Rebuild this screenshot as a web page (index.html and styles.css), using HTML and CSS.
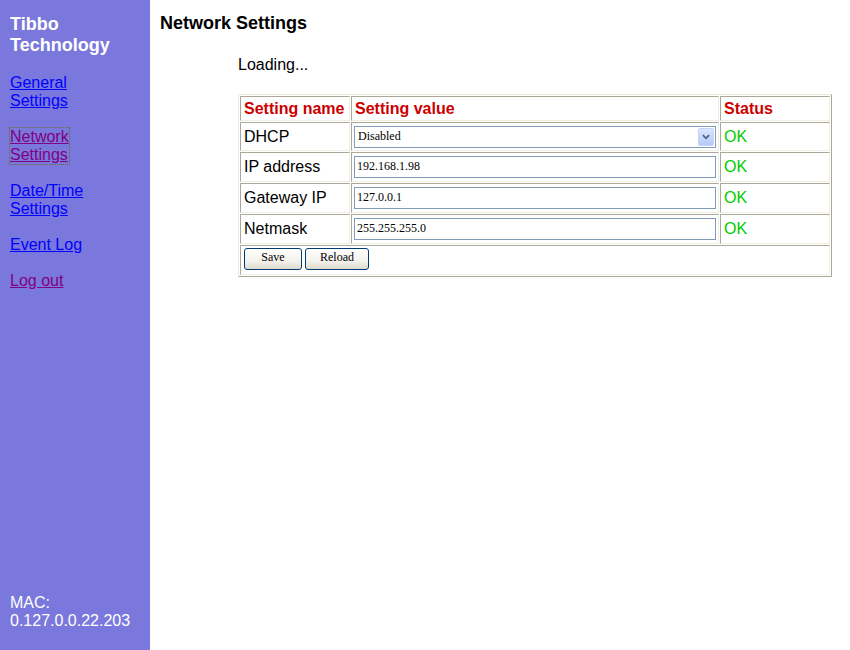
FILE: index.html
```html
<!DOCTYPE html>
<html>
<head>
<meta charset="utf-8">
<title>Network Settings</title>
<link rel="stylesheet" href="styles.css">
</head>
<body>
<div class="page">
  <aside class="sidebar">
    <div class="brand">Tibbo<br>Technology</div>
    <nav class="nav">
      <a href="#general" class="link">General<br>Settings</a>
      <a href="#network" class="link visited focused">Network<br>Settings</a>
      <a href="#datetime" class="link">Date/Time<br>Settings</a>
      <a href="#events" class="link">Event Log</a>
      <a href="#logout" class="link visited">Log out</a>
    </nav>
    <div class="mac">MAC:<br>0.127.0.0.22.203</div>
  </aside>
  <main class="main">
    <div class="title">Network Settings</div>
    <div class="content">
      <div class="loading">Loading...</div>
      <table class="settings">
        <tr class="head">
          <th class="c-name">Setting name</th>
          <th class="c-value">Setting value</th>
          <th class="c-status">Status</th>
        </tr>
        <tr class="row r-first">
          <td class="c-name">DHCP</td>
          <td class="c-value">
            <div class="selwrap">
              <div class="select">Disabled</div>
              <span class="arrow"><svg width="16" height="19" viewBox="0 0 16 19"><path d="M4.5 8 L8 11.5 L11.5 8" fill="none" stroke="#4d6185" stroke-width="2"/></svg></span>
            </div>
          </td>
          <td class="c-status ok">OK</td>
        </tr>
        <tr class="row">
          <td class="c-name">IP address</td>
          <td class="c-value"><input class="field" type="text" value="192.168.1.98"></td>
          <td class="c-status ok">OK</td>
        </tr>
        <tr class="row">
          <td class="c-name">Gateway IP</td>
          <td class="c-value"><input class="field" type="text" value="127.0.0.1"></td>
          <td class="c-status ok">OK</td>
        </tr>
        <tr class="row">
          <td class="c-name">Netmask</td>
          <td class="c-value"><input class="field" type="text" value="255.255.255.0"></td>
          <td class="c-status ok">OK</td>
        </tr>
        <tr class="row buttons">
          <td colspan="3"><button class="btn btn-save">Save</button><button class="btn btn-reload">Reload</button></td>
        </tr>
      </table>
    </div>
  </main>
</div>
</body>
</html>
```

FILE: styles.css
```css
html, body {
  margin: 0;
  padding: 0;
  background: #ffffff;
}

body {
  font-family: "Liberation Sans", Arial, sans-serif;
  font-size: 16px;
  color: #000;
}

.page {
  display: flex;
  height: 650px;
  width: 850px;
}

.sidebar {
  width: 150px;
  flex: 0 0 150px;
  box-sizing: border-box;
  background: #7a78dc;
  padding: 14px 10px 20px 10px;
  display: flex;
  flex-direction: column;
  color: #ffffff;
}

.brand {
  font-weight: bold;
  font-size: 18px;
  line-height: 21px;
}

.nav {
  display: flex;
  flex-direction: column;
  align-items: flex-start;
  gap: 18px;
  margin-top: 18px;
}

.link {
  color: #0000ff;
  text-decoration: underline;
  font-size: 16px;
  line-height: 18px;
}

.link.visited {
  color: #800080;
}

.link.focused {
  outline: 1px dotted #6b6b2a;
}

.mac {
  margin-top: auto;
  font-size: 16px;
  line-height: 18px;
}

.main {
  flex: 1;
  padding: 13px 0 0 10px;
}

.title {
  font-weight: bold;
  font-size: 18px;
  line-height: 21px;
}

.content {
  margin-left: 78px;
  margin-top: 22px;
}

.loading {
  font-size: 16px;
  line-height: 18px;
  margin-bottom: 20px;
}

.settings {
  border-collapse: separate;
  border-spacing: 1px;
  border-style: solid;
  border-width: 1px;
  border-color: #ece9d8 #aca899 #aca899 #ece9d8;
  width: 594px;
  table-layout: fixed;
}

.settings th,
.settings td {
  box-sizing: border-box;
  border-style: solid;
  border-width: 1px;
  border-color: #aca899 #f1efe2 #f1efe2 #aca899;
  padding: 0 3px;
  text-align: left;
  vertical-align: middle;
  font-size: 16px;
  line-height: 18px;
}

.settings th {
  color: #cc0000;
  font-weight: bold;
  height: 25px;
}

.settings .row td {
  height: 30px;
}

.settings .r-first td {
  height: 29px;
}

.c-name { width: 110px; }
.c-value { width: 368px; }
.c-status { width: 110px; }

.settings td.c-value {
  padding: 0 2px;
}

.ok {
  color: #00cc00;
}

.field,
.select {
  display: block;
  box-sizing: border-box;
  width: 100%;
  height: 22px;
  margin: 0;
  border: 1px solid #7f9db9;
  background: #fff;
  font-family: "Liberation Serif", "Times New Roman", serif;
  font-size: 12px;
  line-height: 18px;
  padding: 0 2px 2px 2px;
  color: #000;
  outline: none;
}

.selwrap {
  position: relative;
}

.select {
  padding-left: 3px;
}

.arrow {
  position: absolute;
  right: 2px;
  top: 2px;
  width: 16px;
  height: 18px;
  box-sizing: border-box;
  border: 1px solid #c3d3fd;
  border-radius: 2px;
  background: linear-gradient(#dbe5fd, #b7c9f7);
  display: flex;
  align-items: center;
  justify-content: center;
  overflow: hidden;
}

.arrow svg {
  display: block;
}

.settings .buttons td {
  padding: 2px 3px 3px 3px;
  vertical-align: top;
}

.btn {
  box-sizing: border-box;
  height: 22px;
  margin: 0 3px 0 0;
  padding: 0 0 3px 0;
  border: 1px solid #003c74;
  border-radius: 3px;
  background: linear-gradient(#ffffff 0%, #f3f2ec 60%, #dedbcd 100%);
  font-family: "Liberation Serif", "Times New Roman", serif;
  font-size: 12px;
  color: #000;
  vertical-align: top;
}

.btn-save { width: 58px; }
.btn-reload { width: 64px; }
```
